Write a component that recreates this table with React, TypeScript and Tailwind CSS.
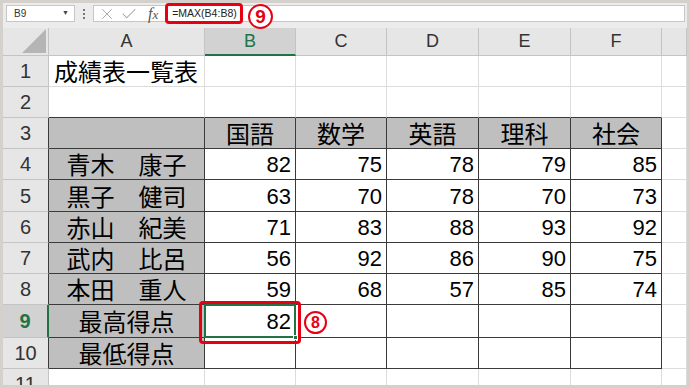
import React from "react";
import { X, Check } from "lucide-react";

type CellValue = string | number;

const COLS = ["A", "B", "C", "D", "E", "F", ""];

// row number -> values for A..G
const DATA: Record<number, CellValue[]> = {
  1: ["成績表一覧表"],
  2: [],
  3: ["", "国語", "数学", "英語", "理科", "社会"],
  4: ["青木　康子", 82, 75, 78, 79, 85],
  5: ["黒子　健司", 63, 70, 78, 70, 73],
  6: ["赤山　紀美", 71, 83, 88, 93, 92],
  7: ["武内　比呂", 56, 92, 86, 90, 75],
  8: ["本田　重人", 59, 68, 57, 85, 74],
  9: ["最高得点", 82, "", "", "", ""],
  10: ["最低得点", "", "", "", "", ""],
  11: [],
};

const ROWS = [1, 2, 3, 4, 5, 6, 7, 8, 9, 10, 11];

const Circled: React.FC<{ n: number; big?: boolean }> = ({ n, big }) => (
  <div
    className={
      big
        ? "w-[25px] h-[25px] rounded-full border-[2.5px] border-[#e60012] text-[#e60012] flex items-center justify-center font-bold text-[19px] leading-none bg-white"
        : "w-[23px] h-[23px] rounded-full border-2 border-[#e60012] text-[#e60012] flex items-center justify-center font-bold text-[16px] leading-none bg-white"
    }
  >
    {n}
  </div>
);

// ============================
// FORMULA BAR
// ============================
const FormulaBar: React.FC = () => (
  <div className="h-[25px] flex items-start pt-[2px] pl-[3px] pr-[2px] bg-[#ececec]">
    <div className="w-[69px] h-[17px] bg-white border border-[#c6c6c6] flex items-center pl-[7px] pr-[5px] text-[10px] text-[#333]">
      <span className="flex-1">B9</span>
      <span className="text-[7px] text-[#444]">▼</span>
    </div>
    <div className="w-[17px] h-[17px] flex flex-col items-center justify-center gap-[2px]">
      <span className="w-[2px] h-[2px] bg-[#777]" />
      <span className="w-[2px] h-[2px] bg-[#777]" />
      <span className="w-[2px] h-[2px] bg-[#777]" />
    </div>
    <div className="relative flex-1 h-[17px] bg-white border border-[#c6c6c6] flex items-center ml-[1px]">
      <X className="ml-[4px] w-[18px] h-[18px] text-[#a0a0a0]" strokeWidth={1.2} />
      <Check className="ml-[4px] w-[18px] h-[18px] text-[#a0a0a0]" strokeWidth={1.4} />
      <span className="ml-[10px] font-['Liberation_Serif',serif] italic text-[16px] text-[#555] leading-none">
        f<span className="text-[13px]">x</span>
      </span>
      <span className="ml-[14px] text-[10.5px] text-[#222]">=MAX(B4:B8)</span>
      <div className="absolute left-[71px] top-[-3px] w-[78px] h-[21px] border-[3px] border-[#e60012] rounded-[4px]" />
      <div className="absolute left-[154px] top-[-2px]">
        <Circled n={9} big />
      </div>
    </div>
  </div>
);

// ============================
// CELL
// ============================
const Cell: React.FC<{ r: number; c: number }> = ({ r, c }) => {
  const value = DATA[r][c] ?? "";
  const inTable = r >= 3 && r <= 10 && c <= 5;
  const above = r === 2 && c <= 5;
  const gray = inTable && (c === 0 || r === 3);
  const selected = r === 9 && c === 1;

  const rightCls = inTable ? "border-r-[#3a3a3a]" : "border-r-[#dcdcdc]";
  const bottomCls = inTable || above ? "border-b-[#3a3a3a]" : "border-b-[#dcdcdc]";

  let content: React.ReactNode = null;
  if (typeof value === "number") {
    content = (
      <div className="w-full h-full flex items-center justify-end pr-[4px] pt-[1px] text-[22px] text-black font-['Liberation_Sans',sans-serif]">
        {value}
      </div>
    );
  } else if (value !== "") {
    content = (
      <div
        className={
          r === 1
            ? "w-full h-full flex items-center pl-[5px] text-[24px] text-black whitespace-nowrap font-['Noto_Sans_CJK_JP',sans-serif]"
            : "w-full h-full flex items-center justify-center text-[24px] text-black whitespace-nowrap font-['Noto_Sans_CJK_JP',sans-serif]"
        }
      >
        {value}
      </div>
    );
  }

  return (
    <div
      className={`relative border-r border-b ${rightCls} ${bottomCls} ${
        gray ? "bg-[#bfbfbf]" : "bg-white"
      } ${selected ? "z-10" : ""}`}
    >
      {content}
      {selected && (
        <>
          <div className="absolute left-[-1px] top-[-1px] right-[-1px] bottom-[-1px] border-2 border-[#217346]" />
          <div className="absolute right-[-3px] bottom-[-3px] w-[5px] h-[5px] bg-[#217346] border border-white" />
          <div className="absolute left-[-6px] top-[-4px] w-[102px] h-[43px] border-[3px] border-[#e60012] rounded-[4px]" />
          <div className="absolute left-[99px] top-[6px]">
            <Circled n={8} />
          </div>
        </>
      )}
    </div>
  );
};

// ============================
// APP
// ============================
const App: React.FC = () => {
  return (
    <div className="w-[690px] h-[388px] border-[3px] border-[#d4d0cc] bg-[#ececec] overflow-hidden flex flex-col font-['Liberation_Sans',sans-serif]">
      <FormulaBar />

      <div className="flex-1 overflow-hidden grid grid-cols-[46px_156px_91px_91px_92px_92px_91px_25px] grid-rows-[28px_31px_31px_31px_31px_32px_31px_31px_31px_33px_31px_1fr]">
        {/* ================= COLUMN HEADERS ================= */}
        <div className="relative bg-[#e6e6e6] border-r border-b border-[#c4c4c4]">
          <svg className="absolute right-[2px] bottom-[2px]" width="24" height="24" viewBox="0 0 24 24">
            <polygon points="24,0 24,24 0,24" fill="#b5b5b5" />
          </svg>
        </div>
        {COLS.map((col, i) =>
          i === 1 ? (
            <div
              key={i}
              className="bg-[#d2d2d2] border-r border-r-[#c4c4c4] border-b-2 border-b-[#217346] flex items-center justify-center text-[18px] text-[#217346]"
            >
              {col}
            </div>
          ) : (
            <div
              key={i}
              className="bg-[#e6e6e6] border-r border-b border-[#c4c4c4] flex items-center justify-center text-[18px] text-[#333]"
            >
              {col}
            </div>
          )
        )}

        {/* ================= ROWS ================= */}
        {ROWS.map((r) => (
          <React.Fragment key={r}>
            {r === 9 ? (
              <div className="bg-[#d2d2d2] border-b border-b-[#c4c4c4] border-r-2 border-r-[#217346] flex items-center justify-center text-[20px] font-bold text-[#217346]">
                {r}
              </div>
            ) : (
              <div
                className={`bg-[#e6e6e6] border-b border-b-[#c4c4c4] border-r ${
                  r >= 3 && r <= 10 ? "border-r-[#3a3a3a]" : "border-r-[#c4c4c4]"
                } flex items-center justify-center text-[20px] text-[#333]`}
              >
                {r}
              </div>
            )}
            {COLS.map((_, c) => (
              <Cell key={c} r={r} c={c} />
            ))}
          </React.Fragment>
        ))}
      </div>
    </div>
  );
};

export default App;
